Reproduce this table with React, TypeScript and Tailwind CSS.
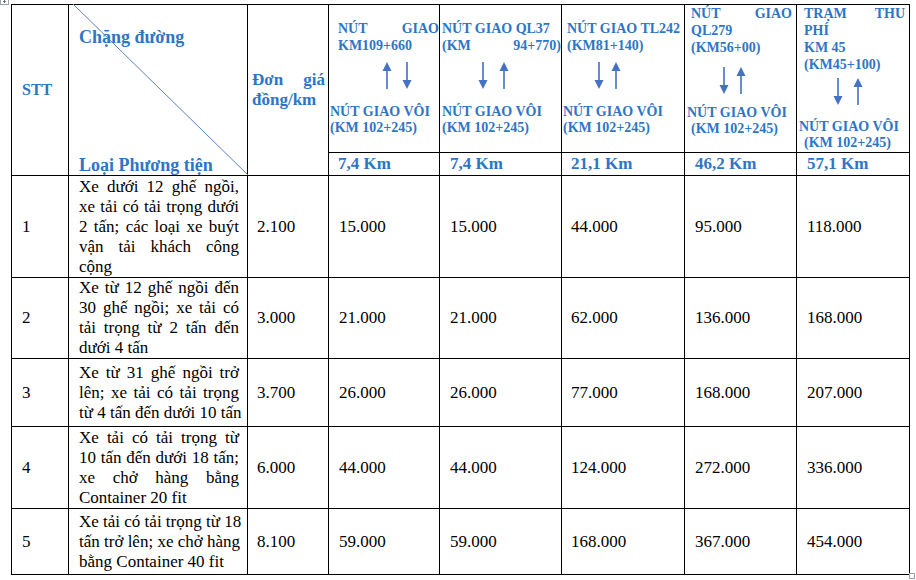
import React from 'react';

type Line = { t: string; j?: boolean; pl?: number };

type RouteCol = {
  pt: string;
  pad: string;
  top: Line[];
  arrows: ('up' | 'down')[];
  arrowWrap: string;
  bottomMt: string;
  bottom: { t: string; pl: string }[];
};

const routes: RouteCol[] = [
  {
    pt: 'pt-[15px]',
    pad: 'pl-[9px] pr-0',
    top: [{ t: 'NÚT GIAO', j: true }, { t: 'KM109+660' }],
    arrows: ['up', 'down'],
    arrowWrap: 'mt-[8px] pl-[53px] gap-[10px]',
    bottomMt: 'mt-[15px]',
    bottom: [
      { t: 'NÚT GIAO VÔI', pl: 'pl-[1px]' },
      { t: '(KM 102+245)', pl: 'pl-[1px]' },
    ],
  },
  {
    pt: 'pt-[15px]',
    pad: 'pl-[2px] pr-0',
    top: [{ t: 'NÚT GIAO QL37' }, { t: '(KM 94+770)', j: true }],
    arrows: ['down', 'up'],
    arrowWrap: 'mt-[8px] pl-[38px] gap-[11px]',
    bottomMt: 'mt-[15px]',
    bottom: [
      { t: 'NÚT GIAO VÔI', pl: 'pl-[2px]' },
      { t: '(KM 102+245)', pl: 'pl-[2px]' },
    ],
  },
  {
    pt: 'pt-[15px]',
    pad: 'pl-[5px] pr-0',
    top: [{ t: 'NÚT GIAO TL242' }, { t: '(KM81+140)' }],
    arrows: ['down', 'up'],
    arrowWrap: 'mt-[8px] pl-[32px] gap-[7px]',
    bottomMt: 'mt-[15px]',
    bottom: [
      { t: 'NÚT GIAO VÔI', pl: 'pl-[1px]' },
      { t: '(KM 102+245)', pl: 'pl-[1px]' },
    ],
  },
  {
    pt: 'pt-0',
    pad: 'pl-[6px] pr-[4px]',
    top: [{ t: 'NÚT GIAO', j: true }, { t: 'QL279' }, { t: '(KM56+00)' }],
    arrows: ['down', 'up'],
    arrowWrap: 'mt-[11px] pl-[34px] gap-[7px]',
    bottomMt: 'mt-[11px]',
    bottom: [
      { t: 'NÚT GIAO VÔI', pl: 'pl-[2px]' },
      { t: '(KM 102+245)', pl: 'pl-[6px]' },
    ],
  },
  {
    pt: 'pt-0',
    pad: 'pl-[7px] pr-[4px]',
    top: [{ t: 'TRẠM THU', j: true }, { t: 'PHÍ' }, { t: 'KM 45' }, { t: '(KM45+100)' }],
    arrows: ['down', 'up'],
    arrowWrap: 'mt-[5px] pl-[36px] gap-[10px]',
    bottomMt: 'mt-[14px]',
    bottom: [
      { t: 'NÚT GIAO VÔI', pl: 'pl-[2px]' },
      { t: '(KM 102+245)', pl: 'pl-[7px]' },
    ],
  },
];

const kms = [
  { t: '7,4 Km', pl: 'pl-[9px]' },
  { t: '7,4 Km', pl: 'pl-[10px]' },
  { t: '21,1 Km', pl: 'pl-[9px]' },
  { t: '46,2 Km', pl: 'pl-[10px]' },
  { t: '57,1 Km', pl: 'pl-[10px]' },
];

const rows = [
  {
    stt: '1',
    h: 'h-[102px]',
    lines: ['Xe dưới 12 ghế ngồi,', 'xe tải có tải trọng dưới', '2 tấn; các loại xe buýt', 'vận tải khách công', 'cộng'],
    price: '2.100',
    vals: ['15.000', '15.000', '44.000', '95.000', '118.000'],
  },
  {
    stt: '2',
    h: 'h-[80px]',
    lines: ['Xe từ 12 ghế ngồi đến', '30 ghế ngồi; xe tải có', 'tải trọng từ 2 tấn đến', 'dưới 4 tấn'],
    price: '3.000',
    vals: ['21.000', '21.000', '62.000', '136.000', '168.000'],
  },
  {
    stt: '3',
    h: 'h-[68px]',
    lines: ['Xe từ 31 ghế ngồi trở', 'lên; xe tải có tải trọng', 'từ 4 tấn đến dưới 10 tấn'],
    price: '3.700',
    vals: ['26.000', '26.000', '77.000', '168.000', '207.000'],
  },
  {
    stt: '4',
    h: 'h-[82px]',
    lines: ['Xe  tải có tải trọng từ', '10 tấn đến dưới 18 tấn;', 'xe chở hàng bằng', 'Container 20 fit'],
    price: '6.000',
    vals: ['44.000', '44.000', '124.000', '272.000', '336.000'],
  },
  {
    stt: '5',
    h: 'h-[66px]',
    lines: ['Xe tải có tải trọng từ 18', 'tấn trở lên; xe chở hàng', 'bằng Container 40 fit'],
    price: '8.100',
    vals: ['59.000', '59.000', '168.000', '367.000', '454.000'],
  },
];

const valPad = ['pl-[10px]', 'pl-[10px]', 'pl-[9px]', 'pl-[10px]', 'pl-[10px]'];

function Arrow({ dir }: { dir: 'up' | 'down' }) {
  return (
    <svg width="10" height="27" viewBox="0 0 10 27" className="block">
      {dir === 'up' ? (
        <>
          <path d="M5 0 L9.5 9 L0.5 9 Z" fill="#4472c4" />
          <rect x="4.2" y="8" width="1.6" height="19" fill="#4472c4" />
        </>
      ) : (
        <>
          <rect x="4.2" y="0" width="1.6" height="19" fill="#4472c4" />
          <path d="M5 27 L9.5 18 L0.5 18 Z" fill="#4472c4" />
        </>
      )}
    </svg>
  );
}

export default function App() {
  return (
    <div className="relative min-h-[580px] w-[916px] bg-white pl-[11px] pt-[4px] font-['Liberation_Serif',serif]">
      {/* table move handle */}
      <svg className="absolute left-0 top-0" width="9" height="5" viewBox="0 0 9 5">
        <rect x="0.5" y="-3" width="8" height="7.5" fill="white" stroke="#9ca3af" />
        <path d="M4.5 0 V3 M3 1.5 H6" stroke="#4b5563" strokeWidth="0.8" />
      </svg>

      <table className="table-fixed border-collapse w-[899px]">
        <colgroup>
          <col className="w-[57px]" />
          <col className="w-[179px]" />
          <col className="w-[81px]" />
          <col className="w-[111px]" />
          <col className="w-[122px]" />
          <col className="w-[123px]" />
          <col className="w-[112px]" />
          <col className="w-[113px]" />
        </colgroup>
        <tbody>
          {/* Header */}
          <tr>
            <td rowSpan={2} className="border border-black p-0 pl-[10px] align-middle">
              <span className="text-[16px] font-bold text-[#2e75c6]">STT</span>
            </td>
            <td rowSpan={2} className="border border-black p-0 align-top">
              <div className="relative flex h-[170px] flex-col justify-between pl-[10px] pt-[21px] text-[18px] font-bold leading-[22px] text-[#2e75c6]">
                <div>Chặng đường</div>
                <div className="-mb-[1px]">Loại Phương tiện</div>
                <svg className="pointer-events-none absolute inset-0 h-full w-full overflow-visible">
                  <line x1="4" y1="-1" x2="179" y2="170" stroke="#5b82c4" strokeWidth="1" />
                </svg>
              </div>
            </td>
            <td rowSpan={2} className="border border-black p-0 pl-[4px] pr-[3px] align-middle text-[17px] font-bold leading-[20px] text-[#2e75c6]">
              <div className="[text-align-last:justify]">Đơn giá</div>
              <div>đồng/km</div>
            </td>
            {routes.map((r, i) => (
              <td key={i} className="h-[147px] border border-black p-0 align-top text-[#2e75c6] font-bold">
                <div className="h-[147px] overflow-visible">
                  <div className={`${r.pt} ${r.pad} text-[14px] leading-[17px]`}>
                    {r.top.map((l, k) => (
                      <div key={k} className={l.j ? 'whitespace-nowrap [text-align-last:justify]' : 'whitespace-nowrap'}>
                        {l.t}
                      </div>
                    ))}
                  </div>
                  <div className={`flex ${r.arrowWrap}`}>
                    {r.arrows.map((a, k) => (
                      <Arrow key={k} dir={a} />
                    ))}
                  </div>
                  <div className={`${r.bottomMt} text-[14px] leading-[16px]`}>
                    {r.bottom.map((l, k) => (
                      <div key={k} className={`${l.pl} whitespace-nowrap`}>
                        {l.t}
                      </div>
                    ))}
                  </div>
                </div>
              </td>
            ))}
          </tr>
          <tr>
            {kms.map((k, i) => (
              <td key={i} className={`h-[23px] border border-black p-0 ${k.pl} align-middle text-[17px] font-bold leading-[20px] text-[#2e75c6]`}>
                {k.t}
              </td>
            ))}
          </tr>

          {/* Body */}
          {rows.map((r) => (
            <tr key={r.stt} className="text-[17px] leading-[20px] text-black">
              <td className={`${r.h} border border-black p-0 pl-[10px] align-middle`}>{r.stt}</td>
              <td className="border border-black p-0 pl-[10px] pr-[8px] align-middle">
                {r.lines.map((l, k) => (
                  <div
                    key={k}
                    className={
                      k < r.lines.length - 1
                        ? 'whitespace-nowrap [text-align-last:justify]'
                        : 'whitespace-nowrap'
                    }
                  >
                    {l}
                  </div>
                ))}
              </td>
              <td className="border border-black p-0 pl-[9px] align-middle">{r.price}</td>
              {r.vals.map((v, i) => (
                <td key={i} className={`border border-black p-0 ${valPad[i]} align-middle`}>
                  {v}
                </td>
              ))}
            </tr>
          ))}
        </tbody>
      </table>

      {/* resize handle */}
      <div className="absolute left-[909px] top-[573px] h-[6px] w-[6px] border border-gray-400 bg-white" />
    </div>
  );
}
